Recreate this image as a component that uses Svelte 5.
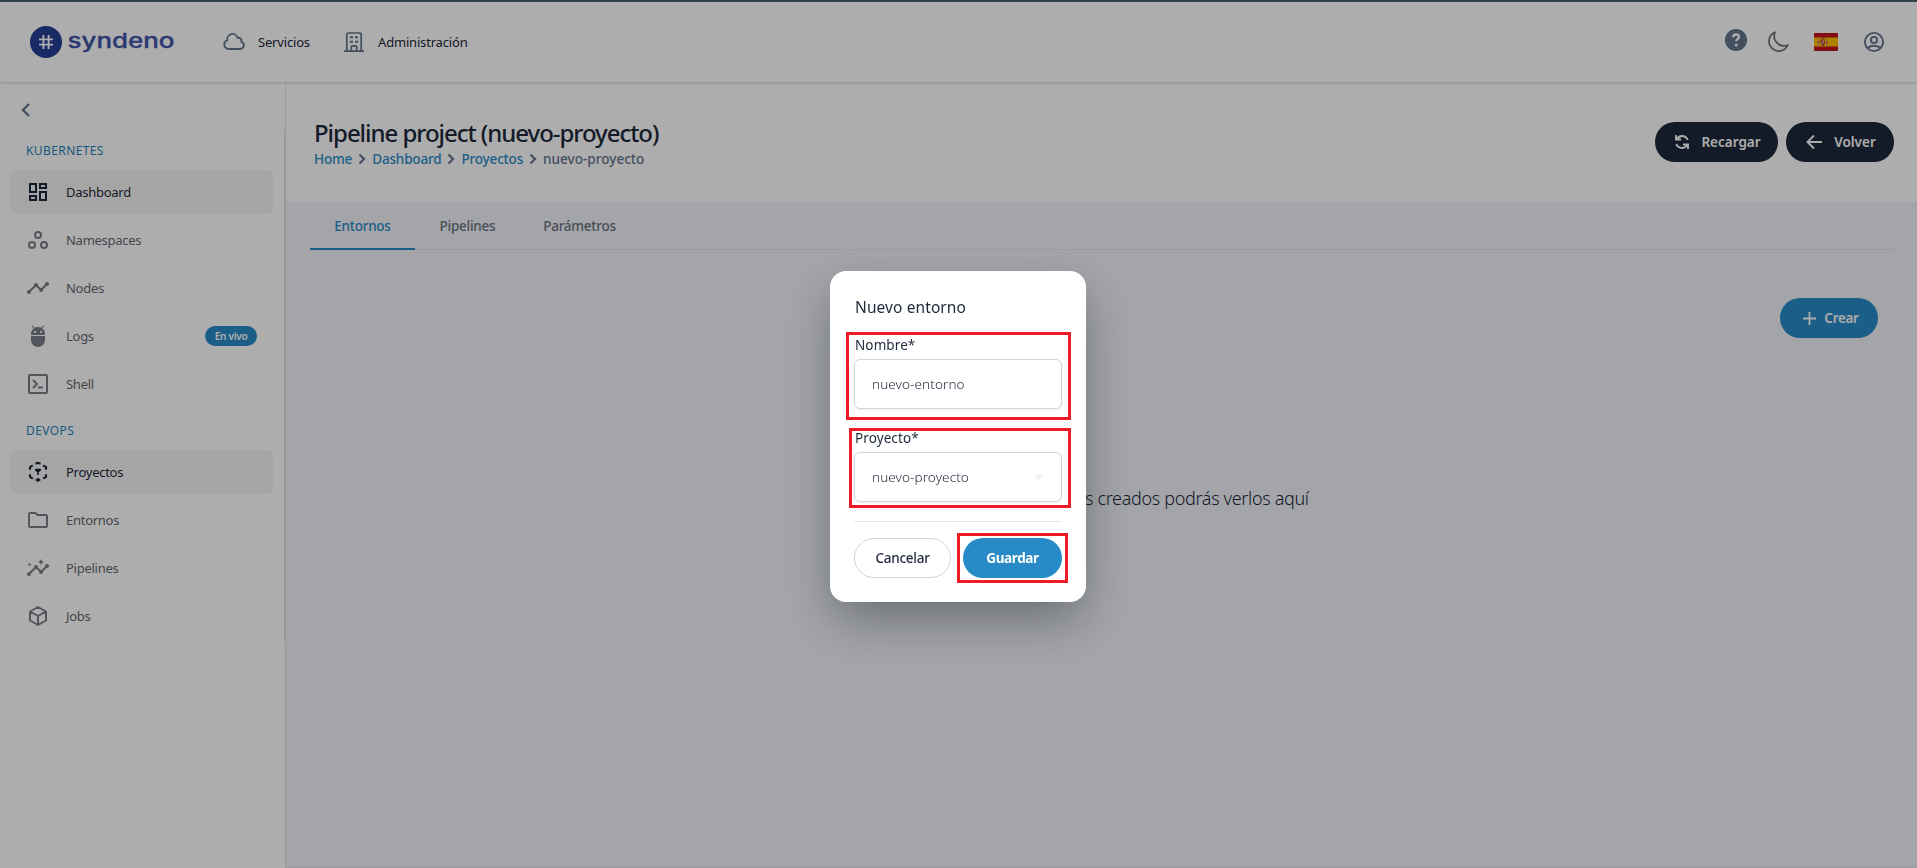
<script>
  const groups = [
    {
      title: 'KUBERNETES',
      items: [
        { label: 'Dashboard', icon: 'dashboard', active: true },
        { label: 'Namespaces', icon: 'workspaces' },
        { label: 'Nodes', icon: 'timeline' },
        { label: 'Logs', icon: 'adb', badge: 'En vivo' },
        { label: 'Shell', icon: 'terminal' }
      ]
    },
    {
      title: 'DEVOPS',
      items: [
        { label: 'Proyectos', icon: 'project', active: true },
        { label: 'Entornos', icon: 'folder' },
        { label: 'Pipelines', icon: 'insights' },
        { label: 'Jobs', icon: 'cube' }
      ]
    }
  ];
  const crumbs = ['Home', 'Dashboard', 'Proyectos'];
  const tabs = ['Entornos', 'Pipelines', 'Parámetros'];
</script>

{#snippet icon(name)}
  <svg class="icon" viewBox="0 0 24 24" width="24" height="24" fill="currentColor">
    {#if name === 'dashboard'}
      <path d="M19 5v2h-4V5h4M9 5v6H5V5h4m10 8v6h-4v-6h4M9 17v2H5v-2h4M21 3h-8v6h8V3zM11 3H3v10h8V3zm10 8h-8v10h8V11zm-10 4H3v6h8v-6z" />
    {:else if name === 'workspaces'}
      <g fill="none" stroke="currentColor" stroke-width="2"><circle cx="12" cy="7" r="3" /><circle cx="6" cy="17" r="3" /><circle cx="18" cy="17" r="3" /></g>
    {:else if name === 'timeline'}
      <path d="M23 8c0 1.100-.9 2-2 2-.18 0-.35-.02-.51-.07l-3.560 3.550c.05.16.07.34.07.52 0 1.100-.9 2-2 2s-2-.9-2-2c0-.18.02-.36.07-.52l-2.550-2.550c-.16.05-.34.07-.52.07s-.36-.02-.52-.07l-4.550 4.560c.05.16.07.33.07.51 0 1.100-.9 2-2 2s-2-.9-2-2 .9-2 2-2c.18 0 .35.02.51.07l4.560-4.550C8.020 9.360 8 9.180 8 9c0-1.100.9-2 2-2s2 .9 2 2c0 .18-.02.36-.07.52l2.550 2.550c.16-.05.34-.07.52-.07s.36.02.52.07l3.550-3.560C19.020 8.350 19 8.180 19 8c0-1.100.9-2 2-2s2 .9 2 2z" />
    {:else if name === 'adb'}
      <path d="M5 16c0 3.870 3.130 7 7 7s7-3.130 7-7v-4H5v4zM16.120 4.370l2.100-2.100-.82-.83-2.300 2.310C14.160 3.280 13.120 3 12 3s-2.160.28-3.090.75L6.600 1.440l-.82.83 2.100 2.100C6.140 5.640 5 7.680 5 10v1h14v-1c0-2.320-1.140-4.360-2.880-5.630zM9 9c-.55 0-1-.45-1-1s.45-1 1-1 1 .45 1 1-.45 1-1 1zm6 0c-.55 0-1-.45-1-1s.45-1 1-1 1 .45 1 1-.45 1-1 1z" />
    {:else if name === 'terminal'}
      <g fill="none" stroke="currentColor" stroke-width="2"><rect x="3" y="3" width="18" height="18" rx="1" /><path d="m7 8 4 4-4 4M12 15.500h5" /></g>
    {:else if name === 'project'}
      <g fill="none" stroke="currentColor" stroke-width="2.100"><path d="M9.500 3.800 12 2.800l2.500 1M17.200 5.300 20 7v2.700M20 14.300V17l-2.800 1.700M6.800 18.700 4 17v-2.700M4 9.700V7l2.800-1.700" /></g>
      <path d="m9 9 3-.5 3 .5v1.600l-2.200 1.700V15h-1.600v-2.700L9 10.600zM9 20l3-2.200 3 2.200-3 1.900z" />
    {:else if name === 'folder'}
      <path d="m9.170 6 2 2H20v10H4V6h5.170M10 4H4c-1.100 0-1.990.9-1.990 2L2 18c0 1.100.9 2 2 2h16c1.100 0 2-.9 2-2V8c0-1.100-.9-2-2-2h-8l-2-2z" />
    {:else if name === 'insights'}
      <path d="M21 8c-1.450 0-2.260 1.440-1.930 2.510l-3.550 3.560c-.3-.09-.74-.09-1.040 0l-2.550-2.550C12.270 10.450 11.460 9 10 9c-1.450 0-2.270 1.440-1.930 2.520l-4.560 4.550C2.440 15.740 1 16.550 1 18c0 1.100.9 2 2 2 1.450 0 2.260-1.440 1.930-2.510l4.550-4.560c.3.09.74.09 1.040 0l2.550 2.550C12.730 16.550 13.540 18 15 18c1.450 0 2.270-1.440 1.930-2.520l3.560-3.550C21.560 12.260 23 11.450 23 10c0-1.100-.9-2-2-2zM15 9l.94-2.070L18 6l-2.060-.93L15 3l-.92 2.070L12 6l2.080.93zM3.500 11 4 9l2-.5L4 8l-.5-2L3 8l-2 .5L3 9z" />
    {:else if name === 'cube'}
      <g fill="none" stroke="currentColor" stroke-width="2" stroke-linejoin="round"><path d="m12 3 8 4.500v9L12 21l-8-4.500v-9zM4 7.500l8 4.500 8-4.500M12 12v9" /></g>
    {:else if name === 'cloud'}
      <path d="M2.250 15a4.500 4.500 0 0 0 4.500 4.500H18a3.750 3.750 0 0 0 1.330-7.260 3 3 0 0 0-3.760-3.840 5.250 5.250 0 0 0-10.230 2.330A4.500 4.500 0 0 0 2.250 15z" fill="none" stroke="currentColor" stroke-width="1.800" transform="translate(0 -.5)" />
    {:else if name === 'building'}
      <g fill="none" stroke="currentColor" stroke-width="1.700"><path d="M2 21.200h20M4.800 21V4.500A1.600 1.600 0 0 1 6.400 3h11.200a1.600 1.600 0 0 1 1.600 1.500V21M9.300 21v-4.200q0-1 1-1h3.400q1 0 1 1V21" /><path d="M8 7.300h3M13 7.300h3M8 11.800h3M13 11.800h3" stroke-width="2" /></g>
    {/if}
  </svg>
{/snippet}

<div class="app">
  <header class="topbar">
    <div class="brand">
      <svg width="32" height="32" viewBox="0 0 32 32"><circle cx="16" cy="16" r="16" fill="#253e96" /><path d="M13.400 9v14M18.600 9v14M9 13.400h14M9 18.600h14" stroke="#fff" stroke-width="1.900" fill="none" /></svg>
      <svg class="wordmark" width="112" height="40" viewBox="0 0 112 40"><text x="-.5" y="26" textLength="107" lengthAdjust="spacingAndGlyphs">syndeno</text></svg>
    </div>
    <nav>
      <span class="navitem">{@render icon('cloud')}Servicios</span>
      <span class="navitem admin">{@render icon('building')}Administración</span>
    </nav>
    <div class="tools">
      <svg class="help" width="22" height="22" viewBox="0 0 22 22"><circle cx="11" cy="11" r="11" fill="#64748b" /><path d="M8 8.300q.3-2.800 3-2.800t3 2.400c0 2-2.700 2-2.700 4.300" stroke="#fff" stroke-width="2.300" fill="none" /><circle cx="11.200" cy="15.900" r="1.500" fill="#fff" /></svg>
      <svg class="moon" width="24" height="24" viewBox="0 0 24 24"><path d="M21.750 15A9.700 9.700 0 0 1 9 2.250 9.750 9.750 0 1 0 21.750 15z" fill="none" stroke="#737373" stroke-width="1.800" stroke-linejoin="round" /></svg>
      <svg class="flag" width="24" height="18" viewBox="0 0 24 18"><rect width="24" height="18" rx="1" fill="#c3131c" /><path d="M0 4.500h24v9H0z" fill="#fec000" /><path d="M4 6h1.200v7H4zM12 6h1.200v7H12z" fill="#cc9a86" /><path d="M6.500 6.500h4.400v4q-.3 2.200-2.200 2.500-1.900-.3-2.200-2.500zM7 3.500h3.500v2H7zM3 8.500h2v1H3zM12 9h2v1h-2z" fill="#bd3b2d" /><path d="M8.700 7.500h1.400v2H8.700zM7.300 9.700h1.400v1.500H7.300z" fill="#eeb" /></svg>
      <svg class="user" width="24" height="24" viewBox="0 0 24 24" fill="none" stroke="#64748b" stroke-width="1.900"><circle cx="12" cy="12" r="9.100" /><circle cx="12" cy="10" r="3.100" /><path d="M5.500 18q2.800-2.200 6.500-2.200t6.500 2.200" /></svg>
    </div>
  </header>

  <div class="body">
    <aside>
      <div class="collapse"><svg width="12" height="16" viewBox="0 0 12 16"><path d="m9 2-6 6 6 6" fill="none" stroke="#64748b" stroke-width="2.400" /></svg></div>
      <div class="menu">
        {#each groups as group}
          <div class="group">
            <h4>{group.title}</h4>
            {#each group.items as item}
              <div class="item" class:active={item.active}>
                {@render icon(item.icon)}
                <span>{item.label}</span>
                {#if item.badge}<b>{item.badge}</b>{/if}
              </div>
            {/each}
          </div>
        {/each}
      </div>
    </aside>

    <main>
      <section class="heading">
        <div>
          <h1>Pipeline project (nuevo-proyecto)</h1>
          <div class="crumbs">
            {#each crumbs as crumb}
              <a href="#top">{crumb}</a><svg width="8" height="12" viewBox="0 0 8 12"><path d="m1.500 1.500 4.500 4.500-4.500 4.500" fill="none" stroke="#64748b" stroke-width="2.200" /></svg>
            {/each}
            <span>nuevo-proyecto</span>
          </div>
        </div>
        <div class="actions">
          <button class="dark reload"><svg width="16" height="16" viewBox="0 0 16 16" fill="none" stroke="currentColor" stroke-width="1.900"><path d="M2 1v4.500h5M3 5q1.800-3 5-3 4 0 5.700 3.800M14 15v-4.500H9M13 11q-1.800 3-5 3-4 0-5.700-3.800" /></svg>Recargar</button>
          <button class="dark back"><svg width="17" height="16" viewBox="0 0 17 16" fill="none" stroke="currentColor" stroke-width="1.900"><path d="M16 8H2M8 1.500 1.500 8 8 14.500" /></svg>Volver</button>
        </div>
      </section>
      <section class="content">
        <div class="tabs">
          {#each tabs as tab, i}<div class="tab" class:current={i === 0}>{tab}</div>{/each}
        </div>
        <div class="toolbar">
          <button class="create"><svg width="13" height="13" viewBox="0 0 13 13"><path d="M6.500 0v13M0 6.500h13" stroke="currentColor" stroke-width="1.800" /></svg>Crear</button>
        </div>
        <p class="empty">s creados podrás verlos aquí</p>
      </section>
    </main>
  </div>
</div>

<div class="overlay">
  <div class="dialog">
    <h2>Nuevo entorno</h2>
    <div class="field">
      <div class="caption">Nombre*</div>
      <div class="control">nuevo-entorno</div>
    </div>
    <div class="field">
      <div class="caption">Proyecto*</div>
      <div class="control">nuevo-proyecto<i></i></div>
    </div>
    <div class="buttons">
      <button class="cancel">Cancelar</button>
      <button class="save">Guardar</button>
    </div>
    <div class="mark name"></div>
    <div class="mark project"></div>
    <div class="mark submit"></div>
  </div>
</div>

<style>
  :global(body) { margin: 0; overflow: hidden; }
  * { box-sizing: border-box; }
  .app, .overlay { font-family: "Noto Sans", "Open Sans", sans-serif; font-size: 13.5px; color: #1e293b; }
  .app { height: 868px; background: #fff; display: flex; flex-direction: column; }
  svg { display: block; flex: none; }
  button { font: inherit; border: 0; height: 40px; border-radius: 20px; display: flex; align-items: center; justify-content: center; padding: 0; }
  h1, h2, h4, p { margin: 0; font-weight: 400; }

  .topbar { height: 83px; flex: none; border-top: 2px solid #45606b; border-bottom: 1px solid #e2e2e2; box-shadow: 0 1px 2px #0001; display: flex; align-items: center; padding: 0 31px 0 30px; }
  .brand { display: flex; align-items: center; gap: 6px; width: 192px; }
  .wordmark text { font: 500 20.5px "Inter", sans-serif; fill: #4153a8; stroke: #4153a8; stroke-width: .3px; }
  nav { display: flex; font-size: 13px; letter-spacing: -.18px; }
  .navitem { display: flex; align-items: center; gap: 12px; width: 120px; }
  .navitem.admin { width: 150px; }
  .navitem .icon { color: #64748b; }
  .tools { margin-left: auto; display: flex; align-items: center; }
  .help { margin: 0 19px 5px 0; }
  .moon { margin: 0 24px 1px 0; }
  .flag { margin: 0 24px 0 0; }

  .body { flex: 1; display: flex; min-height: 0; }
  aside { width: 286px; border-right: 1px solid #e2e2e5; flex: none; }
  .collapse { height: 47px; padding: 19px 0 0 20px; }
  .menu { height: 512px; border-right: 1px solid #dfe0ea; padding: 5px 11px 0 10px; font-size: 13px; letter-spacing: -.27px; }
  .group { padding-bottom: 5px; }
  h4 { height: 35px; padding-left: 16px; line-height: 31px; font-size: 12px; letter-spacing: .4px; color: #2684be; }
  .item { height: 44px; margin-bottom: 4px; border-radius: 6px; display: flex; align-items: center; padding: 0 16px; gap: 16px; color: #636972; }
  .item.active { background: #f4f4f4; color: #1e293b; }
  .item .icon { color: #797f88; }
  .item.active .icon { color: #1e293b; }
  .item b { margin-left: auto; background: #288bc7; color: #fff; font-size: 10px; font-weight: 600; height: 20px; width: 52px; border-radius: 10px; display: flex; align-items: center; justify-content: center; }

  main { flex: 1; display: flex; flex-direction: column; }
  .heading { height: 119px; display: flex; justify-content: space-between; padding: 32px 23px 0 28px; }
  h1 { font-size: 24px; line-height: 36px; height: 37px; letter-spacing: -1.04px; font-weight: 500; color: #1e293b; }
  .crumbs { display: flex; align-items: center; gap: 6px; line-height: 14px; font-weight: 500; letter-spacing: -.17px; color: #64748b; }
  .crumbs span { letter-spacing: .03px; }
  .crumbs a { color: #288bc7; text-decoration: none; }
  .actions { display: flex; gap: 8px; padding-top: 7px; font-weight: 600; letter-spacing: -.3px; }
  .dark { background: #1e293b; color: #fff; gap: 11px; padding-left: 2px; }
  .reload { width: 123px; }
  .back { width: 108px; }
  .content { flex: 1; background: #f2f3f9; padding: 0 23px 0 24px; border-bottom: 1px solid #e5e5ea; }
  .tabs { height: 48px; display: flex; border-bottom: 1px solid #e2e4e9; }
  .tab { width: 105px; height: 48px; line-height: 49px; text-align: center; color: #6b7280; font-weight: 500; letter-spacing: -.25px; }
  .tab:last-child { width: 119px; }
  .tab.current { color: #288bc7; border-bottom: 2px solid #288bc7; }
  .toolbar { display: flex; justify-content: flex-end; padding: 48px 16px 0 0; }
  .create { width: 98px; background: #288bc7; color: #fff; gap: 8px; font-weight: 600; padding-left: 4px; letter-spacing: -.3px; }
  .empty { padding: 144px 0 0 775px; font-size: 18px; line-height: 32px; font-weight: 300; letter-spacing: -.33px; }

  .overlay { position: fixed; inset: 0; background: rgba(0, 0, 0, .32); display: grid; place-items: center; padding: 5px 1px 0 0; }
  .dialog { position: relative; width: 256px; height: 331px; border-radius: 16px; background: #fff; padding: 24px; box-shadow: 0 20px 50px -4px #0c1a1a66; }
  h2 { font-size: 15.5px; line-height: 25px; height: 40px; padding-left: 1px; letter-spacing: .1px; }
  .field { height: 93px; }
  .caption { line-height: 20px; padding-left: 1px; letter-spacing: .1px; }
  .control { height: 50px; margin-top: 4px; border: 1px solid #cbd5e1; border-radius: 6px; box-shadow: 0 1px 2px #0001; padding: 0 17px; font-weight: 300; letter-spacing: .1px; display: flex; align-items: center; justify-content: space-between; }
  i { border: 5px solid transparent; border-top-color: #edf0f6; border-bottom: 0; }
  .buttons { border-top: 1px solid #e2e8f0; display: flex; justify-content: space-between; padding-top: 16px; }
  .cancel { width: 97px; border: 1px solid #cbd5e1; background: #fff; color: #1e293b; font-weight: 500; letter-spacing: -.25px; }
  .save { width: 99px; background: #288bc7; color: #fff; font-weight: 700; letter-spacing: -.4px; }
  .mark { position: absolute; border: 3px solid #ed1c24; }
  .name { left: 16px; top: 61px; width: 225px; height: 88px; }
  .project { left: 19px; top: 157px; width: 222px; height: 80px; }
  .submit { left: 127px; top: 262px; width: 111px; height: 50px; }
</style>
